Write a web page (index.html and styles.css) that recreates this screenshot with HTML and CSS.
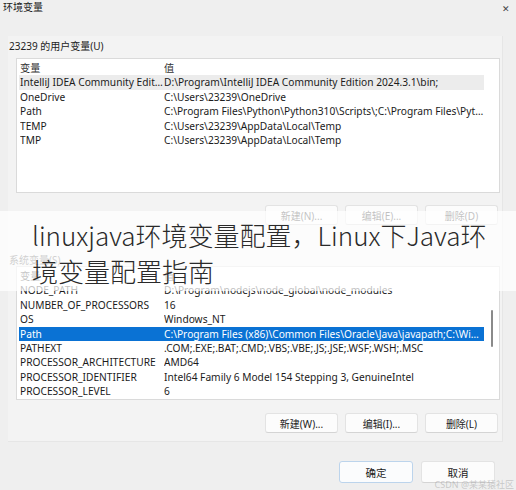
FILE: index.html
```html
<!DOCTYPE html>
<html lang="zh-CN">
<head>
<meta charset="utf-8">
<title>环境变量</title>
<link rel="stylesheet" href="styles.css">
</head>
<body>
<div class="window">
  <div class="titlebar">
    <span class="title">环境变量</span>
    <span class="close">✕</span>
  </div>
  <div class="panel">
    <div class="group-label">23239 的用户变量(U)</div>
    <div class="listbox user-list">
      <div class="row head"><span class="name">变量</span><span class="value">值</span></div>
      <div class="row soft"><span class="name">IntelliJ IDEA Community Edition</span><span class="value">D:\Program\IntelliJ IDEA Community Edition 2024.3.1\bin;</span></div>
      <div class="row"><span class="name">OneDrive</span><span class="value">C:\Users\23239\OneDrive</span></div>
      <div class="row"><span class="name">Path</span><span class="value">C:\Program Files\Python\Python310\Scripts\;C:\Program Files\Python\Python310\</span></div>
      <div class="row"><span class="name">TEMP</span><span class="value">C:\Users\23239\AppData\Local\Temp</span></div>
      <div class="row"><span class="name">TMP</span><span class="value">C:\Users\23239\AppData\Local\Temp</span></div>
    </div>
    <div class="btn-row">
      <button class="btn">新建(N)...</button>
      <button class="btn">编辑(E)...</button>
      <button class="btn">删除(D)</button>
    </div>
    <div class="group-label sys-label">系统变量(S)</div>
    <div class="listbox sys-list">
      <div class="row head"><span class="name">变量</span><span class="value">值</span></div>
      <div class="row"><span class="name">NODE_PATH</span><span class="value">D:\Program\nodejs\node_global\node_modules</span></div>
      <div class="row"><span class="name">NUMBER_OF_PROCESSORS</span><span class="value">16</span></div>
      <div class="row"><span class="name">OS</span><span class="value">Windows_NT</span></div>
      <div class="row selected"><span class="name">Path</span><span class="value">C:\Program Files (x86)\Common Files\Oracle\Java\javapath;C:\Windows\system32</span></div>
      <div class="row"><span class="name">PATHEXT</span><span class="value">.COM;.EXE;.BAT;.CMD;.VBS;.VBE;.JS;.JSE;.WSF;.WSH;.MSC</span></div>
      <div class="row"><span class="name">PROCESSOR_ARCHITECTURE</span><span class="value">AMD64</span></div>
      <div class="row"><span class="name">PROCESSOR_IDENTIFIER</span><span class="value">Intel64 Family 6 Model 154 Stepping 3, GenuineIntel</span></div>
      <div class="row"><span class="name">PROCESSOR_LEVEL</span><span class="value">6</span></div>
      <div class="scrollbar"></div>
    </div>
    <div class="btn-row sys-btns">
      <button class="btn">新建(W)...</button>
      <button class="btn">编辑(I)...</button>
      <button class="btn">删除(L)</button>
    </div>
  </div>
  <div class="footer">
    <button class="btn big default">确定</button>
    <button class="btn big">取消</button>
  </div>
  <div class="watermark">CSDN @某某猿社区</div>
  <div class="overlay">
    <h1 class="headline">linuxjava环境变量配置，Linux下Java环<br>境变量配置指南</h1>
  </div>
</div>
</body>
</html>
```

FILE: styles.css
```css
* { box-sizing: border-box; }
html, body {
  margin: 0;
  padding: 0;
}
body {
  width: 516px;
  height: 490px;
  overflow: hidden;
  background: #efefef;
  font-family: "Noto Sans", "Noto Sans CJK SC", sans-serif;
  font-size: 10.2px;
  color: #1b1b1b;
}
.window {
  position: relative;
  width: 516px;
  height: 490px;
}
.titlebar {
  height: 36px;
  display: flex;
  justify-content: space-between;
  align-items: flex-start;
  padding: 1px 6px 0 3px;
}
.title {
  font-size: 10px;
  line-height: 13px;
  color: #222;
}
.close {
  font-size: 9px;
  line-height: 13px;
  color: #444;
  margin-top: 1px;
}
.panel {
  margin-left: 8px;
  width: 495px;
  height: 406px;
  background: #f3f3f3;
  border-right: 1px solid #e6e6e6;
  border-bottom: 1px solid #e6e6e6;
  padding: 3px 0 0 1px;
}
.group-label {
  font-size: 10px;
  line-height: 14px;
  color: #222;
}
.listbox {
  position: relative;
  margin: 5px 0 0 7px;
  width: 484px;
  height: 135px;
  background: #fff;
  border: 1px solid #dadada;
  padding: 2px 0 0 2px;
}
.row {
  display: flex;
  width: 465px;
  height: 14.4px;
  line-height: 14.4px;
  padding-left: 1px;
  white-space: nowrap;
}
.row .name {
  width: 144px;
  overflow: hidden;
  text-overflow: ellipsis;
  flex: none;
}
.row .value {
  flex: 1;
  min-width: 0;
  overflow: hidden;
  text-overflow: ellipsis;
}
.row.head { color: #333; }
.row.soft { background: #ececec; }
.row.selected {
  background: #0a72d4;
  color: #fff;
}
.btn-row {
  display: flex;
  justify-content: flex-end;
  gap: 7px;
  margin: 12px 4px 0 0;
}
.btn {
  width: 73px;
  height: 20px;
  padding: 0;
  background: #fcfcfc;
  border: 1px solid #e3e3e3;
  border-bottom-color: #d4d4d4;
  border-radius: 3px;
  font-family: "Noto Sans", "Noto Sans CJK SC", sans-serif;
  font-size: 10px;
  color: #1b1b1b;
}
.sys-label {
  margin-top: 29px;
  line-height: 12px;
  color: #555;
}
.sys-list {
  margin-top: 0;
  height: 134px;
}
.sys-btns { margin-top: 13px; }
.scrollbar {
  position: absolute;
  left: 474px;
  top: 43px;
  width: 2px;
  height: 37px;
  background: #8a8a8a;
  border-radius: 1px;
}
.footer {
  display: flex;
  justify-content: flex-end;
  gap: 8px;
  padding: 19px 21px 0 0;
}
.btn.big {
  width: 74px;
  height: 22px;
  font-size: 10.5px;
}
.btn.default {
  border-color: #bcd4ec;
  background: #fbfcfd;
}
.watermark {
  position: absolute;
  right: 2px;
  bottom: 0;
  font-size: 9px;
  line-height: 10px;
  color: rgba(150,150,150,0.45);
}
.overlay {
  position: absolute;
  left: 0;
  top: 211px;
  width: 516px;
  height: 80px;
  background: rgba(255,255,255,0.72);
  padding: 6px 0 0 32px;
}
.headline {
  margin: 0;
  font-family: "Noto Sans CJK SC", sans-serif;
  font-weight: 300;
  font-size: 26px;
  line-height: 36px;
  color: #2a2a2a;
  white-space: nowrap;
}
```
